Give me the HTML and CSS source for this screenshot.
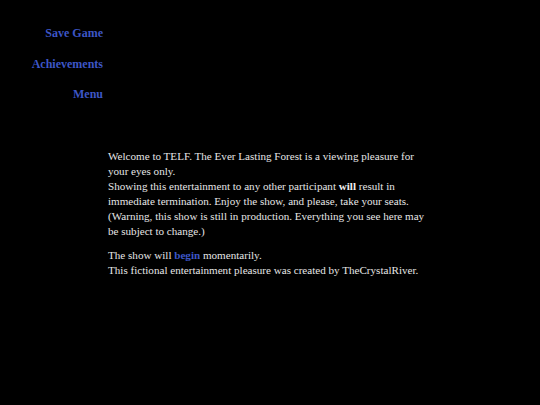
FILE: index.html
```html
<!DOCTYPE html>
<html>
<head>
<meta charset="utf-8">
<link rel="stylesheet" href="styles.css">
</head>
<body>
<div class="page">
  <nav class="menu">
    <a class="menu-item" href="#">Save Game</a>
    <a class="menu-item" href="#">Achievements</a>
    <a class="menu-item" href="#">Menu</a>
  </nav>
  <main class="story">
    <p class="para">Welcome to TELF. The Ever Lasting Forest is a viewing pleasure for your eyes only.<br>Showing this entertainment to any other participant <b class="strong">will</b> result in immediate termination. Enjoy the show, and please, take your seats.<br>(Warning, this show is still in production. Everything you see here may be subject to change.)</p>
    <p class="para">The show will <a class="link" href="#">begin</a> momentarily.<br>This fictional entertainment pleasure was created by TheCrystalRiver.</p>
  </main>
</div>
</body>
</html>
```
FILE: styles.css
```css
html, body {
  margin: 0;
  padding: 0;
  background: #000;
  height: 100%;
}
body {
  font-family: "Liberation Serif", "DejaVu Serif", serif;
  color: #e6e6e6;
}
.page {
  display: flex;
  align-items: flex-start;
}
.menu {
  width: 103px;
  display: flex;
  flex-direction: column;
  align-items: flex-end;
  gap: 15px;
  padding-top: 26px;
}
.menu-item {
  color: #3d56c6;
  text-decoration: none;
  font-weight: bold;
  font-size: 12px;
  line-height: 15.5px;
}
.story {
  margin-left: 5px;
  padding-top: 149px;
  width: 322px;
  font-size: 11.1px;
  line-height: 15px;
}
.para {
  margin: 0 0 9px 0;
}
.strong {
  font-weight: bold;
  color: #f0f0f0;
}
.link {
  color: #3d56c6;
  text-decoration: none;
  font-weight: bold;
}
```
